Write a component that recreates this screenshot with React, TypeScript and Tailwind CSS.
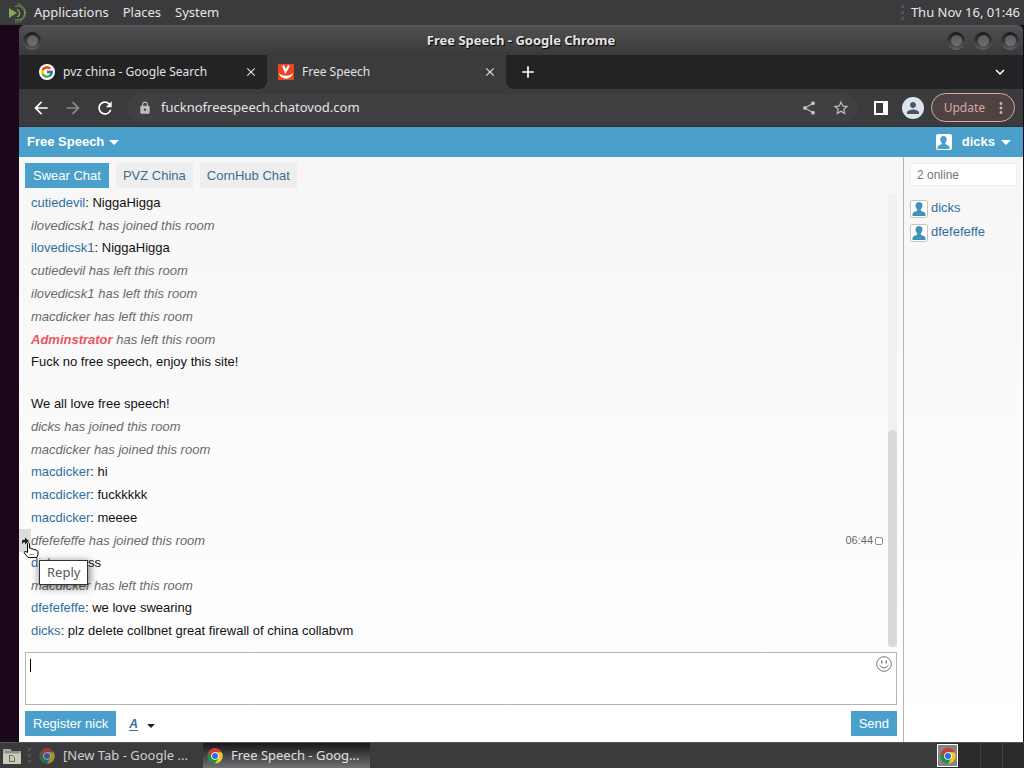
import React from "react";
import {
  MdArrowBack,
  MdArrowForward,
  MdRefresh,
  MdLock,
  MdShare,
  MdStarBorder,
  MdClose,
  MdAdd,
  MdExpandMore,
  MdMoreVert,
  MdPerson,
} from "react-icons/md";
import { FcGoogle } from "react-icons/fc";

type Entry =
  | { kind: "say"; nick: string; text: string }
  | { kind: "event"; lines: { nick: string; text: string; admin?: boolean; hovered?: boolean }[] }
  | { kind: "welcome"; text: string };

const log: Entry[] = [
  { kind: "say", nick: "cutiedevil", text: "NiggaHigga" },
  { kind: "event", lines: [{ nick: "ilovedicsk1", text: "has joined this room" }] },
  { kind: "say", nick: "ilovedicsk1", text: "NiggaHigga" },
  {
    kind: "event",
    lines: [
      { nick: "cutiedevil", text: "has left this room" },
      { nick: "ilovedicsk1", text: "has left this room" },
      { nick: "macdicker", text: "has left this room" },
      { nick: "Adminstrator", text: "has left this room", admin: true },
    ],
  },
  { kind: "welcome", text: "Fuck no free speech, enjoy this site!\n\nWe all love free speech!" },
  {
    kind: "event",
    lines: [
      { nick: "dicks", text: "has joined this room" },
      { nick: "macdicker", text: "has joined this room" },
    ],
  },
  { kind: "say", nick: "macdicker", text: "hi" },
  { kind: "say", nick: "macdicker", text: "fuckkkkk" },
  { kind: "say", nick: "macdicker", text: "meeee" },
  { kind: "event", lines: [{ nick: "dfefefeffe", text: "has joined this room", hovered: true }] },
  { kind: "say", nick: "dicks", text: "yesss" },
  { kind: "event", lines: [{ nick: "macdicker", text: "has left this room" }] },
  { kind: "say", nick: "dfefefeffe", text: "we love swearing" },
  { kind: "say", nick: "dicks", text: "plz delete collbnet great firewall of china collabvm" },
];

function ChromeLogo({ className }: { className?: string }) {
  return (
    <svg viewBox="0 0 48 48" className={className} aria-hidden="true">
      <circle cx="24" cy="24" r="23" fill="#1e9048" />
      <path d="M24 1a23 23 0 0 1 19.920 11.500H24A11.500 11.500 0 0 0 14 18.300L4.080 12.500A23 23 0 0 1 24 1z" fill="#d93a2f" />
      <path d="M4.080 12.500L14.040 29.750 24 24V12.500z" fill="#d93a2f" />
      <path d="M43.920 12.500A23 23 0 0 1 24 47l9.960-17.250L24 12.500z" fill="#f9c22e" />
      <circle cx="24" cy="24" r="11.500" fill="#fff" />
      <circle cx="24" cy="24" r="9" fill="#2a6fdc" />
    </svg>
  );
}

function WindowButton({ label }: { label: string }) {
  return (
    <button
      aria-label={label}
      className="flex size-[18px] items-center justify-center rounded-full border-b border-[#666669] bg-linear-to-b from-[#19191b] to-[#58585a]"
    >
      <span className="size-[11px] rounded-full bg-linear-to-b from-[#5a5a5c] to-[#707072]" />
    </button>
  );
}

function Caret() {
  return (
    <svg viewBox="0 0 10 5" className="h-[5px] w-[10px]" aria-hidden="true">
      <path d="M0 0h10L5 5z" fill="currentColor" />
    </svg>
  );
}

function UserGlyph({ className }: { className?: string }) {
  return (
    <svg viewBox="0 0 16 16" className={className} aria-hidden="true">
      <path
        d="M8 1c2.200 0 3.500 1.600 3.500 3.600 0 1.500-.7 3-1.700 3.800v1.300l3.200 1.400c1 .5 1.500 1.400 1.500 2.600V15h-13v-1.300c0-1.200.5-2.100 1.500-2.600l3.200-1.400V8.400C5.200 7.600 4.500 6.100 4.500 4.600 4.500 2.600 5.800 1 8 1z"
        fill="currentColor"
      />
    </svg>
  );
}

function Grip() {
  return (
    <span className="flex flex-col gap-[3px]" aria-hidden="true">
      <span className="size-[3px] bg-[#525254]" />
      <span className="size-[3px] bg-[#525254]" />
      <span className="size-[3px] bg-[#525254]" />
    </span>
  );
}

function TopPanel() {
  return (
    <header className="flex h-[25px] shrink-0 items-center bg-[#3b3b3d] pr-1 pl-2 text-[13px] text-[#e6e6e6]">
      <svg viewBox="0 0 20 20" className="size-5" aria-hidden="true">
        <path d="M1 5l8 5-8 5z" fill="#87a752" />
        <g fill="none" stroke="#87a752">
          <path d="M9 6.500a4 4 0 0 1 0 7.500" strokeWidth="1.200" />
          <path d="M7 3.500a7 7 0 1 1 0 13" strokeWidth="1" />
          <path d="M10 1a9 9 0 1 1-3 18" strokeWidth="1" strokeDasharray="2 1" />
        </g>
      </svg>
      <nav className="ml-[6px] flex gap-[14px]">
        <button>Applications</button>
        <button>Places</button>
        <button>System</button>
      </nav>
      <div className="ml-auto flex items-center gap-[7px]">
        <Grip />
        <time>Thu Nov 16, 01:46</time>
      </div>
    </header>
  );
}

function TitleBar() {
  return (
    <div className="flex h-[30px] shrink-0 items-center justify-between rounded-t-md border-t border-[#5a5a5c] bg-linear-to-b from-[#505052] to-[#3a3a3c] px-1">
      <div className="flex flex-1">
        <WindowButton label="Window menu" />
      </div>
      <h1 className="text-[13px] font-bold text-[#e4e4e4] [text-shadow:1px_1px_1px_#000]">Free Speech - Google Chrome</h1>
      <div className="flex flex-1 justify-end gap-[9px]">
        <WindowButton label="Minimize" />
        <WindowButton label="Maximize" />
        <WindowButton label="Close" />
      </div>
    </div>
  );
}

function TabStrip() {
  return (
    <div className="flex h-[34px] shrink-0 bg-[#3b3b3d] text-[12px] text-[#e2e2e3]">
      <div className="flex w-[248px] items-center rounded-br-lg bg-[#232325] pr-[9px] pl-5">
        <span className="flex size-4 items-center justify-center rounded-full bg-white">
          <FcGoogle className="size-[14px]" />
        </span>
        <span className="ml-2 flex-1">pvz china - Google Search</span>
        <button aria-label="Close tab">
          <MdClose className="size-[14px] stroke-current" />
        </button>
      </div>
      <div className="flex w-[239px] items-center pr-[9px] pl-[11px]">
        <svg viewBox="0 0 16 16" className="size-4" aria-hidden="true">
          <path d="M0 0h16v16H0z" fill="#ee4323" />
          <path d="M5 1.500L7.500 7.500L11 1.500" fill="none" stroke="#fff" strokeWidth="2.200" />
          <path d="M1 9c3 3.500 10.500 3.500 14 0-.5 3-3 5.500-7 5.500S1.500 12 1 9z" fill="#fff" />
        </svg>
        <span className="ml-2 flex-1">Free Speech</span>
        <button aria-label="Close tab">
          <MdClose className="size-[14px] stroke-current" />
        </button>
      </div>
      <div className="flex flex-1 items-center justify-between rounded-bl-lg bg-[#232325] pr-[14px] pl-3 text-white">
        <button aria-label="New tab">
          <MdAdd className="size-5" />
        </button>
        <button aria-label="Search tabs">
          <MdExpandMore className="size-[18px]" />
        </button>
      </div>
    </div>
  );
}

function Toolbar() {
  return (
    <div className="flex h-[38px] shrink-0 items-center border-b border-[#2c3138] bg-[#3b3b3d] pr-2 pl-3">
      <div className="flex gap-3 text-white">
        <button aria-label="Back">
          <MdArrowBack className="size-5" />
        </button>
        <button aria-label="Forward" className="text-[#8a8a8c]">
          <MdArrowForward className="size-5" />
        </button>
        <button aria-label="Reload">
          <MdRefresh className="size-5" />
        </button>
      </div>
      <div className="ml-3 flex h-[28px] flex-1 items-center rounded-full bg-[#403f42] pr-2 pl-[11px] text-[#bdbdbf]">
        <MdLock className="size-[14px] shrink-0" />
        <input
          aria-label="Address"
          className="ml-[9px] min-w-0 flex-1 bg-transparent text-[13px] text-[#e4e4e5] outline-none"
          defaultValue="fucknofreespeech.chatovod.com"
        />
        <button aria-label="Share">
          <MdShare className="size-4" />
        </button>
        <button aria-label="Bookmark" className="ml-[15px]">
          <MdStarBorder className="size-[18px]" />
        </button>
      </div>
      <button aria-label="Side panel" className="ml-4 text-white">
        <svg viewBox="0 0 14 14" className="size-[14px]" aria-hidden="true">
          <path d="M0 0h14v14H0zM2 2v10h7V2z" fill="currentColor" fillRule="evenodd" />
        </svg>
      </button>
      <button
        aria-label="Profile"
        className="ml-[14px] flex size-[22px] items-center justify-center rounded-full bg-[#dfe3ee] text-[#4c5366]"
      >
        <MdPerson className="size-[18px]" />
      </button>
      <button className="ml-[7px] flex h-[29px] items-center rounded-full border border-[#d6aaa6] bg-[#4e4243] pr-1 pl-3 text-[12px] text-[#d9a8a4]">
        Update
        <MdMoreVert className="ml-[7px] size-[18px]" />
      </button>
    </div>
  );
}

function Rooms() {
  const idle = "h-[25px] bg-[#eeeeee] px-[7px] text-[#396d92]";
  return (
    <nav className="flex shrink-0 gap-[7px] px-[6px] pt-[6px]">
      <button className="h-[25px] bg-[#4a9fcb] px-2 text-white">Swear Chat</button>
      <button className={idle}>PVZ China</button>
      <button className={idle}>CornHub Chat</button>
    </nav>
  );
}

function EventLine({ nick, text, admin, hovered }: { nick: string; text: string; admin?: boolean; hovered?: boolean }) {
  return (
    <div className="relative flex items-center py-px pr-[5px] text-[#6a6a6a]">
      <p className="flex-1 italic">
        <span className={admin ? "font-bold text-[#ea5563]" : ""}>{nick}</span> {text}
      </p>
      {hovered && (
        <>
          <time className="text-[11px]">06:44</time>
          <input
            type="checkbox"
            aria-label="Select message"
            className="ml-[2px] size-2 appearance-none rounded-xs border border-[#8c8c8c] bg-white"
          />
          <button
            aria-label="Reply"
            className="absolute top-0 -left-3 flex h-[23px] w-3 items-center justify-center bg-[#dcdcdc] text-[#222]"
          >
            <svg viewBox="0 0 8 8" className="size-2" aria-hidden="true">
              <path d="M4 .5L8 4 4 7.500V5.300H2.800L1 7V4.200Q1 2.800 2.500 2.800H4z" fill="currentColor" />
            </svg>
          </button>
          <svg viewBox="0 0 16 17" className="absolute top-[13px] -left-2 z-20 h-[17px] w-4" aria-hidden="true">
            <path
              d="M4.500 1.500q1.200-1.200 2 .2V6l1.700.3.300.7 1.700-.2.500.8 1.700-.1.500.8h1.200l.9 1v3.200l-1.200 3H5l-3.800-4.700q0-1.600 1.700-1.300l1.600 1z"
              fill="#fff"
              stroke="#000"
            />
            <path d="M6 12l1 1 1-1 1 1 1-1 1 1" fill="none" stroke="#777" strokeWidth=".7" />
          </svg>
          <span
            role="tooltip"
            className="absolute top-[31px] left-2 z-10 border border-[#333] bg-white px-[7px] font-['Noto_Sans','Liberation_Sans',sans-serif] text-[13px] leading-[23px] text-[#555] shadow-[1px_2px_8px_rgba(0,0,0,0.6)]"
          >
            Reply
          </span>
        </>
      )}
    </div>
  );
}

function ChatLog() {
  return (
    <div className="mr-[6px] flex min-h-0 flex-1 justify-between pt-[6px]">
      <div className="flex flex-1 flex-col justify-end pb-[5px] pl-3 leading-[21px]">
        {log.map((entry, i) => {
          if (entry.kind === "event") {
            return (
              <div key={i} className="-mb-px">
                {entry.lines.map((line, j) => (
                  <EventLine key={j} {...line} />
                ))}
              </div>
            );
          }
          return (
            <p key={i} className="py-px whitespace-pre-line text-[#111]">
              {entry.kind === "say" && (
                <>
                  <a href="#nick" className="text-[#2f6f9f]">
                    {entry.nick}
                  </a>
                  {": "}
                </>
              )}
              {entry.text}
            </p>
          );
        })}
      </div>
      <div className="flex w-[9px] flex-col justify-end bg-[#f0f0f0]">
        <div className="h-[48%] rounded-full bg-[#d9d9d9]" />
      </div>
    </div>
  );
}

function Composer() {
  return (
    <form className="shrink-0 px-[6px] pt-[5px] pb-[6px]" onSubmit={(e) => e.preventDefault()}>
      <div className="flex h-[53px] border border-[#b2b6b0] bg-white">
        <span className="mt-[6px] ml-1 h-[13px] w-px bg-black" aria-hidden="true" />
        <textarea
          aria-label="Message"
          className="flex-1 resize-none bg-transparent py-1 caret-transparent outline-none"
        />
        <button type="button" aria-label="Smileys" className="mt-[3px] mr-1 size-4 text-[#777]">
          <svg viewBox="0 0 16 16" className="size-4" aria-hidden="true">
            <g fill="none" stroke="currentColor">
              <circle cx="8" cy="8" r="7.300" />
              <path d="M3.500 9.300q4.500 5.400 9 0" />
              <path d="M5.700 4.500v3M10.300 4.500v3" strokeWidth="1.300" />
            </g>
          </svg>
        </button>
      </div>
      <div className="mt-[6px] flex items-center">
        <button type="button" className="h-[25px] bg-[#4a9fcb] px-2 text-white">
          Register nick
        </button>
        <button type="button" aria-label="Text style" className="ml-[13px] flex items-center gap-[9px] text-[#222]">
          <span className="text-[12px] font-bold text-[#2f6f9f] italic underline underline-offset-2">A</span>
          <svg viewBox="0 0 8 4" className="mt-1 h-1 w-2" aria-hidden="true">
            <path d="M0 0h8L4 4z" fill="currentColor" />
          </svg>
        </button>
        <button type="submit" className="ml-auto h-[25px] bg-[#4a9fcb] px-2 text-white">
          Send
        </button>
      </div>
    </form>
  );
}

function Sidebar() {
  return (
    <aside className="w-[120px] shrink-0 border-l border-[#b5b5b5] px-[6px] pt-[6px]">
      <h2 className="h-[23px] border border-[#f0f0f0] bg-white px-[6px] text-[12px] leading-[22px] text-[#777]">2 online</h2>
      <ul className="mt-[13px] flex flex-col gap-[6px]">
        {["dicks", "dfefefeffe"].map((nick) => (
          <li key={nick} className="flex h-[18px] items-center gap-[3px]">
            <span className="mt-[2px] flex size-[18px] items-center justify-center rounded-xs border border-[#c6c6c6] bg-white text-[#3f93bd]">
              <UserGlyph className="size-4" />
            </span>
            <a href="#user" className="text-[#2f6f9f]">
              {nick}
            </a>
          </li>
        ))}
      </ul>
    </aside>
  );
}

function ChatPage() {
  return (
    <main className="flex min-h-0 flex-1 flex-col bg-linear-to-b from-[#f6f6f6] to-white font-['Liberation_Sans',Arial,sans-serif] text-[13px]">
      <div className="flex h-[30px] shrink-0 items-center justify-between bg-[#4a9fcb] pr-3 pl-2 font-bold text-white">
        <button className="flex items-center gap-[5px]">
          Free Speech
          <Caret />
        </button>
        <button className="flex items-center">
          <span className="mr-[10px] flex size-4 items-center justify-center rounded-xs bg-white text-[#4a9fcb]">
            <UserGlyph className="size-[15px]" />
          </span>
          <span className="mr-[6px]">dicks</span>
          <Caret />
        </button>
      </div>
      <div className="flex min-h-0 flex-1">
        <section className="flex min-w-0 flex-1 flex-col">
          <Rooms />
          <ChatLog />
          <Composer />
        </section>
        <Sidebar />
      </div>
    </main>
  );
}

function Taskbar() {
  return (
    <footer className="flex h-[26px] shrink-0 items-stretch border-t border-[#555557] bg-[#3b3b3d] pl-[2px] text-[13px] text-[#e0e0e0]">
      <button aria-label="Files" className="mr-[6px] self-center">
        <svg viewBox="0 0 20 18" className="h-[18px] w-5" aria-hidden="true">
          <path d="M1 3q0-1 1-1h6l2 2h8q1 0 1 1v11q0 1-1 1H2q-1 0-1-1z" fill="#aeb09f" />
          <path d="M1 7h18v9q0 1-1 1H2q-1 0-1-1z" fill="#c9cbb9" />
          <path d="M3 5h14" stroke="#6d6f63" />
          <path d="M7.500 8.500h3l2 2v4h-5z" fill="none" stroke="#65675c" />
        </svg>
      </button>
      <span className="flex items-center">
        <Grip />
      </span>
      <button className="ml-2 flex w-[164px] items-center gap-2 text-[#cfcfcf]">
        <ChromeLogo className="size-4 opacity-60" />
        <span>[New Tab - Google ...</span>
      </button>
      <button className="flex w-[167px] items-center gap-2 bg-linear-to-b from-[#19191b] to-[#727274] pl-1">
        <ChromeLogo className="size-4" />
        <span>Free Speech - Goog...</span>
      </button>
      <div className="ml-auto flex bg-[#2a2a2c]">
        <button aria-label="Workspace 1" className="my-px flex w-[21px] items-center justify-center border border-white bg-[#858587]">
          <ChromeLogo className="size-4" />
        </button>
        <span className="w-[23px] border-r border-[#3f3f41]" />
        <span className="w-[22px] border-r border-[#3f3f41]" />
        <span className="w-[21px]" />
      </div>
    </footer>
  );
}

export default function App() {
  return (
    <div className="flex h-screen flex-col overflow-hidden bg-[#1a0719] font-['Noto_Sans','Liberation_Sans',sans-serif]">
      <TopPanel />
      <div className="mr-px ml-[19px] flex min-h-0 flex-1 flex-col">
        <TitleBar />
        <TabStrip />
        <Toolbar />
        <ChatPage />
      </div>
      <Taskbar />
    </div>
  );
}
